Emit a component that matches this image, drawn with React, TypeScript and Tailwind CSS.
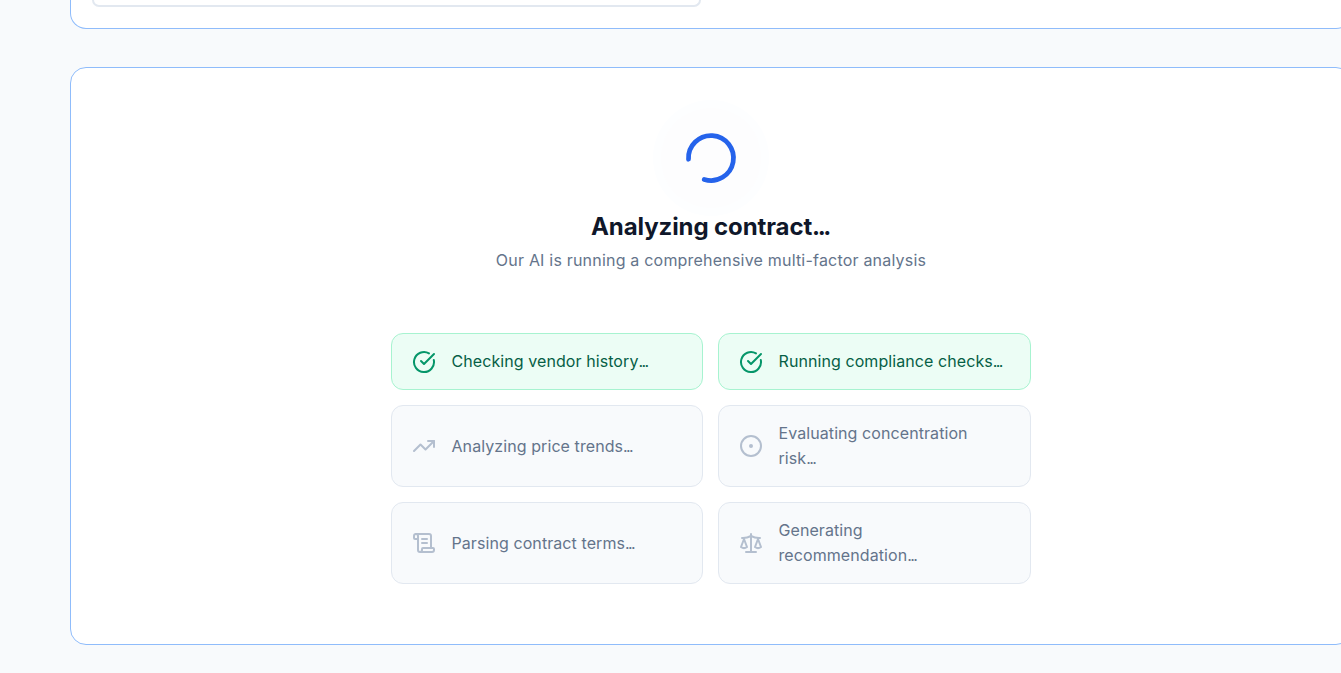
import { CircleCheckBig, CircleDot, Scale, ScrollText, TrendingUp, type LucideIcon } from "lucide-react"

interface Step {
  label: string
  icon: LucideIcon
  done?: boolean
}

const steps: Step[] = [
  { label: "Checking vendor history", icon: CircleCheckBig, done: true },
  { label: "Running compliance checks", icon: CircleCheckBig, done: true },
  { label: "Analyzing price trends", icon: TrendingUp },
  { label: "Evaluating concentration risk", icon: CircleDot },
  { label: "Parsing contract terms", icon: ScrollText },
  { label: "Generating recommendation", icon: Scale },
]

// the dots sit much tighter in the reference than Inter sets them
const Dots = () => <span className="tracking-[-0.1em]">...</span>

const StepCard = ({ label, icon: Icon, done }: Step) => (
  <div
    className={
      done
        ? "flex items-center gap-[15.5px] rounded-[12px] border border-[#a7f3d0] bg-[#ecfdf5] py-[15px] pr-[25px] pl-[20px] text-[#065f46]"
        : "flex items-center gap-[15.5px] rounded-[12px] border border-[#e2e8f0] bg-[#f8fafc] py-[15px] pr-[25px] pl-[20px] text-[#64748b]"
    }
  >
    <Icon className={done ? "size-6 shrink-0 text-[#059669]" : "size-6 shrink-0 text-[#b4bfcf]"} />
    <span className="text-[16px] leading-[25px] tracking-[0.08px]">
      {label}
      <Dots />
    </span>
  </div>
)

export default function App() {
  return (
    <div className="h-[673px] overflow-hidden bg-[#f8fafc] font-['Inter',sans-serif]">
      <div className="ml-[70px] h-[29px] w-[1282px] rounded-b-[16px] border-x border-b border-[#8fbcfb] bg-white pl-[21px]">
        <div className="h-[7px] w-[609px] rounded-b-[16px] border-x-2 border-b-2 border-[#e2e8f0]" />
      </div>
      <div className="mt-[38px] ml-[70px] flex h-[578px] w-[1282px] flex-col items-center rounded-[16px] border border-[#8fbcfb] bg-white pt-[40px]">
        <div className="flex size-[100px] items-center justify-center rounded-full bg-[#fdfdfe] ring-8 ring-[#fdfeff]">
          <svg className="size-[60px] text-[#2563eb]" viewBox="0 0 24 24" fill="none" stroke="currentColor" strokeWidth="1.9" strokeLinecap="round">
            <path d="M3.01 12.5A9 9 0 1 1 9.3 20.6" />
          </svg>
        </div>
        <h2 className="mt-[1px] -ml-[2px] text-[24px] leading-[36px] font-bold tracking-[-0.1px] text-[#0f172a]">
          Analyzing contract
          <Dots />
        </h2>
        <p className="mt-[3px] text-[16px] leading-[25px] tracking-[0.2px] text-[#64748b]">
          Our AI is running a comprehensive multi-factor analysis
        </p>
        <div className="mt-[60px] grid w-[640px] grid-cols-[312px_313px] gap-x-[15px] gap-y-[15px]">
          {steps.map((step) => (
            <StepCard key={step.label} {...step} />
          ))}
        </div>
      </div>
    </div>
  )
}
